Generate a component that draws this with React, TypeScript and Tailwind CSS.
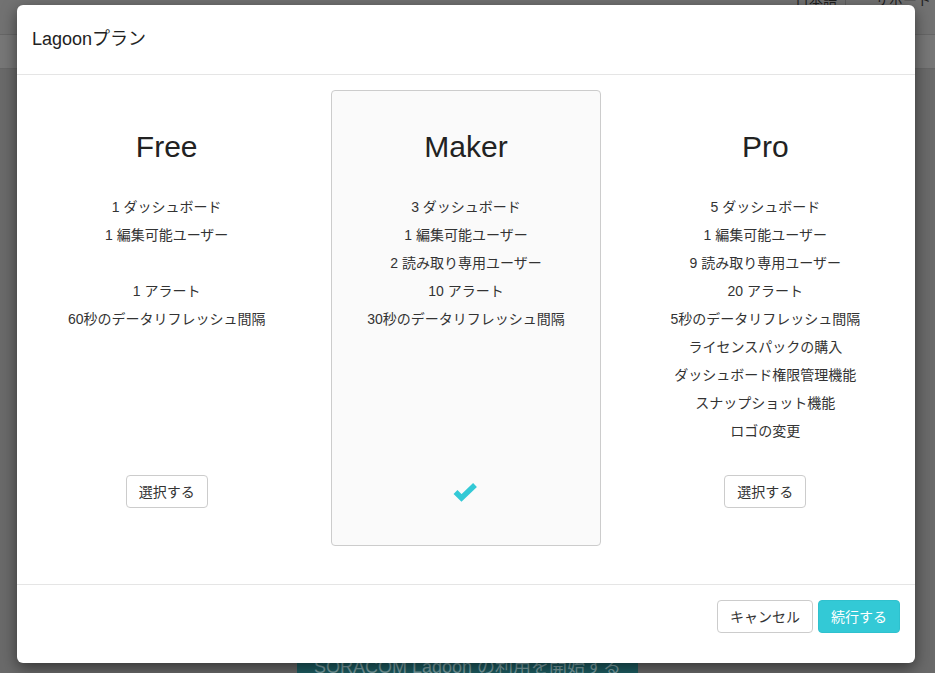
import React from "react";

type Plan = {
  name: string;
  features: string[];
  selected: boolean;
};

const plans: Plan[] = [
  {
    name: "Free",
    features: ["1 ダッシュボード", "1 編集可能ユーザー", "", "1 アラート", "60秒のデータリフレッシュ間隔"],
    selected: false,
  },
  {
    name: "Maker",
    features: ["3 ダッシュボード", "1 編集可能ユーザー", "2 読み取り専用ユーザー", "10 アラート", "30秒のデータリフレッシュ間隔"],
    selected: true,
  },
  {
    name: "Pro",
    features: [
      "5 ダッシュボード",
      "1 編集可能ユーザー",
      "9 読み取り専用ユーザー",
      "20 アラート",
      "5秒のデータリフレッシュ間隔",
      "ライセンスパックの購入",
      "ダッシュボード権限管理機能",
      "スナップショット機能",
      "ロゴの変更",
    ],
    selected: false,
  },
];

function CheckIcon() {
  return (
    <svg width="25" height="20" viewBox="0 0 25 20" aria-hidden="true">
      <polyline
        points="2.5,10 8.5,16 22,3"
        fill="none"
        stroke="#33c9d6"
        strokeWidth="5.5"
        strokeLinejoin="miter"
        strokeLinecap="butt"
      />
    </svg>
  );
}

function PlanColumn({ plan }: { plan: Plan }) {
  return (
    <div className="px-[15px]">
      <div
        className={
          plan.selected
            ? "h-[456px] rounded-[4px] border border-[#cccccc] bg-[#fafafa] flex flex-col items-center"
            : "h-[456px] rounded-[4px] border border-transparent flex flex-col items-center"
        }
      >
        <h2 className="mt-[39px] text-[30px] leading-[33px] text-[#222]">{plan.name}</h2>
        <ul className="mt-[34px] h-[278px] flex flex-col items-center">
          {plan.features.map((f, i) => (
            <li key={i} className="h-[20px] mb-[8.06px] text-[14px] leading-[20px] text-[#333] whitespace-nowrap">
              {f === "" ? "\u00a0" : f}
            </li>
          ))}
        </ul>
        <div className="h-[33px] flex items-center justify-center">
          {plan.selected ? (
            <CheckIcon />
          ) : (
            <button className="h-[33px] px-[12px] rounded-[4px] border border-[#cccccc] bg-white text-[14px] leading-[20px] text-[#333]">
              選択する
            </button>
          )}
        </div>
      </div>
    </div>
  );
}

export default function App() {
  return (
    <div className="relative w-full h-[673px] overflow-hidden bg-[#6a6a6a] font-['Liberation_Sans','Noto_Sans_CJK_JP',sans-serif]">
      {/* page behind the backdrop */}
      <div className="h-[35px] bg-[#727272] border-b border-[#666] flex justify-end pr-[4px] overflow-hidden">
        <div className="flex items-start">
          <span className="-mt-[10px] pr-[8px] text-[14px] leading-[20px] text-[#1f1f1f]">日本語</span>
          <span className="h-full border-l border-[#5f5f5f]" />
          <span className="-mt-[10px] pl-[29px] text-[14px] leading-[20px] text-[#1f1f1f]">サポート</span>
        </div>
      </div>
      <div className="h-[34px] bg-[#777777] border-b border-[#666]" />
      <div className="flex justify-center mt-[575px]">
        <div className="w-[341px] h-[48px] bg-[#1d5d62] flex justify-center pt-[11px] text-[18px] leading-[24px] text-[#7fa3a6]">
          SORACOM Lagoon の利用を開始する
        </div>
      </div>

      {/* modal */}
      <div className="absolute left-[17px] top-[5px] w-[898px] bg-white rounded-[6px] shadow-[0_5px_15px_rgba(0,0,0,0.5)]">
        <div className="h-[70px] border-b border-[#e5e5e5] px-[15px] pb-[2px] flex items-center">
          <h4 className="text-[18px] leading-[26px] text-[#222]">Lagoonプラン</h4>
        </div>
        <div className="pt-[15px] pb-[38px] grid grid-cols-3">
          {plans.map((p) => (
            <PlanColumn key={p.name} plan={p} />
          ))}
        </div>
        <div className="border-t border-[#e5e5e5] pt-[15px] pb-[30px] px-[15px] flex justify-end gap-[5px]">
          <button className="h-[33px] px-[12px] rounded-[4px] border border-[#cccccc] bg-white text-[14px] leading-[20px] text-[#333]">
            キャンセル
          </button>
          <button className="h-[33px] px-[12px] rounded-[4px] border border-[#2fc1ce] bg-[#33c9d6] text-[14px] leading-[20px] text-white">
            続行する
          </button>
        </div>
      </div>
    </div>
  );
}
